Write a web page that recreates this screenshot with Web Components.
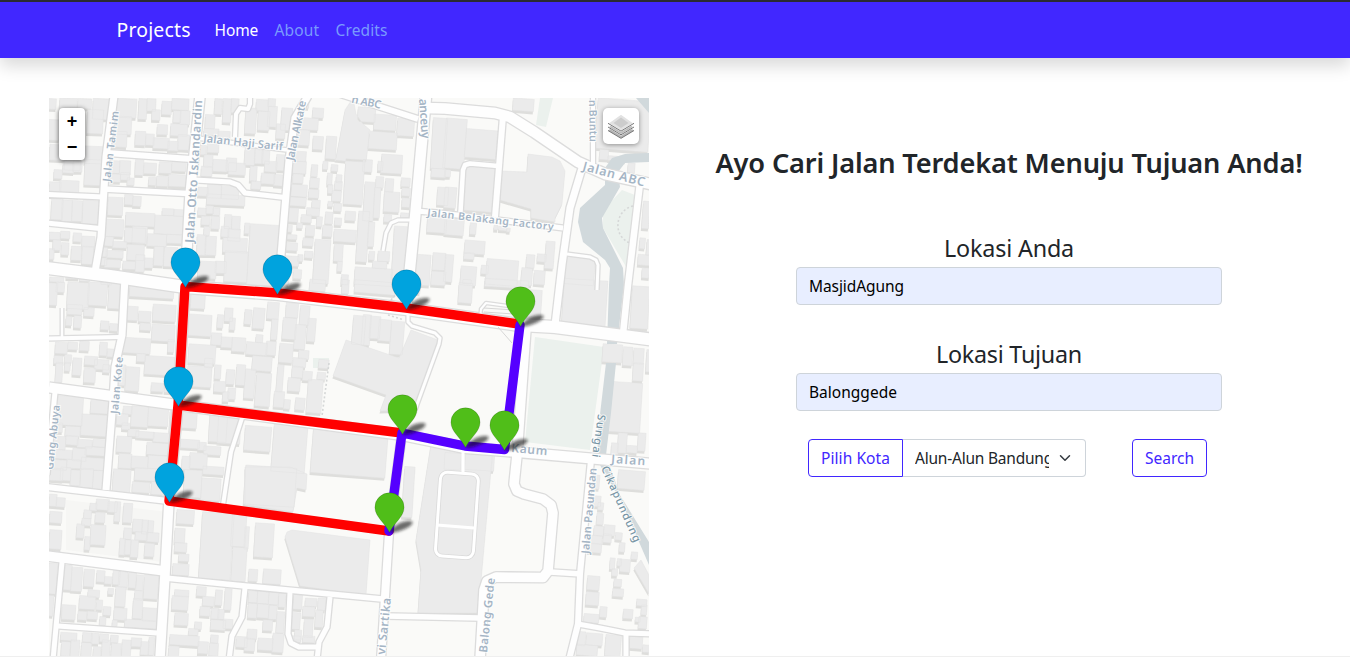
<!DOCTYPE html>
<html lang="id">
<head>
<meta charset="utf-8">
<title>Projects</title>
<style>
html,body{margin:0;height:100%;overflow:hidden}
body{font-family:"Noto Sans","Open Sans",sans-serif;color:#212529;background:#fff}
</style>
</head>
<body>
<app-page></app-page>
<script>
const define=(name,html,setup)=>customElements.define(name,class extends HTMLElement{
  connectedCallback(){
    if(this.shadowRoot)return;
    const t=document.createElement('template');
    t.innerHTML=html;
    this.attachShadow({mode:'open'}).append(t.content.cloneNode(true));
    if(setup)setup.call(this,this.shadowRoot);
  }
});

/* Text tracked to occupy a given width */
define('fit-text',`<style>:host{display:inline-block;white-space:nowrap}span{display:inline-block}</style><span><slot></slot></span>`,function(root){
  const s=root.querySelector('span'),w=+this.getAttribute('width'),n=this.textContent.length;
  this.style.width=w+'px';
  const d=(w-s.getBoundingClientRect().width)/n;
  s.style.letterSpacing=d.toFixed(3)+'px';
});

define('nav-bar',`<style>
:host{display:block;border-top:2px solid #2a2a33;box-shadow:0 8px 16px rgba(0,0,0,.15);position:relative}
nav{height:56px;background:#4127ff;display:flex;align-items:center;padding-left:116.6px;color:#fff;font-size:15.5px}
.brand{font-size:19.4px;margin-right:24px;padding-bottom:1px}
a{margin-right:16.5px;color:#fff}a.dim{color:#799bfd}
</style><nav><fit-text class="brand" width="74">Projects</fit-text><a><fit-text width="43.5">Home</fit-text></a><a class="dim"><fit-text width="44.5">About</fit-text></a><a class="dim"><fit-text width="52">Credits</fit-text></a></nav>`);

define('zoom-control',`<style>
:host{display:block;width:26px;border-radius:4px;background:#fff;box-shadow:0 1px 5px rgba(0,0,0,.65)}
div{height:26px;display:grid;place-items:center}div:first-child{height:25px;border-bottom:1px solid #ccc}
b{font:bold 18px/1 "Liberation Sans",sans-serif;color:#000}
</style><div><b>+</b></div><div><b>−</b></div>`);

define('layers-control',`<style>
:host{display:grid;place-items:center;width:36px;height:36px;border-radius:5px;background:#fff;box-shadow:0 1px 5px rgba(0,0,0,.4)}svg{display:block}
</style><svg width="28" height="28" viewBox="0 0 28 28"><g stroke-linejoin="round" stroke-width="1">
<path d="M1 18.500 14 10l13 8.500-13 7.800z" fill="#b5b5b5"/><path d="M1 18.500l13 7.800 13-7.800" fill="none" stroke="#777"/>
<path d="M1 15 14 6.500 27 15l-13 7.800z" fill="#bcbcbc" stroke="#fff" stroke-width="1.4"/><path d="M1 15l13 7.800L27 15" fill="none" stroke="#777"/>
<path d="M1 11.300 14 2l13 9.300-13 7.800z" fill="#e2e2e2" stroke="#fff" stroke-width="1.400"/><path d="M6.500 11 14 5.600l7.500 5.400-7.500 5z" fill="#ccc"/><path d="M1 11.300l13 7.800 13-7.800" fill="none" stroke="#777"/>
</g></svg>`);

/* Each district holds footprints as x,y,w,h at three units per pixel */
const districts=[
[45,95,3,`10 12 22 30 45 10 50 38 100 12 38 28 145 12 45 60 75 38 20 55 10 75 32 60 128 45 45 70 15 150 50 45 60 170 45 55 120 155 55 50 55 205 30 28 85 200 25 30 28 225 22 25 120 195 50 75 14 262 32 42 45 258 55 45
215 12 58 55 208 65 50 52 198 110 46 45 282 12 22 60 307 12 24 35 322 45 22 30 352 20 26 38 382 12 48 32 386 48 20 34 407 48 26 40 338 90 28 28 378 88 48 34 304 118 22 32 326 130 45 30 370 140 28 26 400 120 32 44 272 110 28 40
195 198 28 36 225 198 30 40 197 238 28 22 228 234 25 20 248 250 18 20 272 195 22 45 298 205 35 30 344 202 34 32 382 200 40 28 312 248 20 22 336 245 32 28 372 240 50 34 
190 308 42 52 240 300 22 28 265 305 22 28 353 342 32 18 388 345 30 18 243 355 85 38 330 363 86 54 184 374 50 50 240 400 60 42 263 395 42 50 308 418 55 35 366 420 44 24 180 426 24 26 204 440 40 18 164 458 22 26 185 468 48 20 248 450 48 45 235 500 35 22 273 480 24 50 300 490 22 28 328 455 26 56 358 458 38 56 164 490 20 20 180 495 45 22
20 313 32 60 52 316 28 62 82 318 28 60 114 318 55 68 14 413 30 20 48 410 25 20 86 415 22 24 112 425 36 30 25 435 20 30 50 444 20 35 80 455 28 40 112 455 32 52 14 462 12 30
510 12 20 45 535 12 22 70 560 12 20 40 482 60 26 40 478 102 42 18 520 110 34 20 460 152 22 26 488 148 32 24 478 180 24 36 505 195 40 34 545 190 28 38 470 215 30 28 552 205 48 34 
460 278 28 24 488 270 40 38 530 275 50 36 486 300 112 30 460 340 22 20 484 333 20 22 505 340 18 20 470 365 24 24 500 365 22 36 540 360 18 40 562 365 22 38 478 395 14 26 530 395 20 30 550 403 34 34 457 420 24 60 482 425 30 55 535 430 70 42 540 470 66 90 512 500 30 34 460 500 52 50
15 548 40 12 65 528 35 22 105 538 28 20 170 544 28 24 258 548 55 22`],
[245,95,4,`2 40 30 75 35 15 34 32 40 50 32 55 70 12 20 22 70 35 24 60 110 40 30 65 95 88 24 42 0 160 28 50 30 165 22 40 52 168 20 38 60 200 34 30 95 180 26 46 16 215 18 42 50 236 38 30 88 240 30 32 20 260 26 22
170 18 20 20 204 40 30 28 168 70 50 34 150 105 42 45 140 170 42 28 144 200 38 35 145 238 28 26 140 270 45 34 134 308 48 24 130 340 28 40 200 210 16 34 205 125 28 38 244 125 28 66 235 200 12 22 260 210 17 18 248 235 12 34 275 240 14 22 250 270 12 24 196 250 25 28 192 284 28 24 202 316 22 22 270 260 20 24 262 288 25 30 250 320 12 14 268 326 20 22 302 350 28 26 186 340 36 22 170 360 28 22 157 385 14 14 216 366 14 28 242 352 20 34 270 370 18 20 183 392 24 30 234 392 26 32 175 430 28 22 126 392 14 18 122 420 32 12 120 444 36 22 112 484 48 28 180 470 22 18 160 480 12 18
208 435 44 130 268 405 64 35 268 448 24 50 278 500 12 28 300 194 54 134 358 262 28 115 338 350 30 150 370 382 16 72 388 278 16 90 394 246 20 32 422 252 22 38 418 292 44 58 470 250 24 24 472 280 22 22 472 310 22 26 418 360 20 20 468 355 26 12 400 470 32 28 373 470 14 24 384 500 40 20 445 395 45 155 330 520 110 50 290 540 18 28 510 480 44 90 564 475 36 50 560 530 40 40
562 70 40 150 560 222 40 24 578 278 30 52 548 360 55 52 12 390 92 180 112 525 18 42 146 525 22 25 0 385 12 30
355 195 25 35 410 180 60 54 400 200 12 26 372 112 82 50 458 72 48 50 388 60 64 45 340 38 50 42`],
[445,95,5,`205 12 60 35 0 72 60 148 62 105 92 84 58 210 90 138 0 225 15 20 0 278 32 60 0 370 55 50 76 385 16 32 148 392 9 12 162 396 22 10 186 400 8 10 60 438 58 38 58 474 28 18 0 480 22 80 48 515 44 55 125 495 92 75 110 512 18 24 245 480 22 38 278 478 24 22 302 440 24 80 230 520 30 50 268 528 30 40 362 488 85 80 455 15 158 150 465 165 24 28 490 185 50 12 550 205 18 28 594 320 18 80 585 430 14 30 606 435 10 45 580 480 34 30 592 520 20 28`],
[45,280,4,`10 10 25 65 35 8 22 28 68 8 62 78 130 8 55 68 192 5 35 80 68 75 42 28 64 110 15 26 88 108 20 35 118 84 28 24 168 124 22 24 195 132 22 20 255 20 130 32 245 80 32 40 282 95 34 30 325 75 66 48 286 130 30 20 322 135 66 48 235 175 80 44 370 180 16 36 276 222 24 22 300 230 86 54 243 262 38 70 205 255 35 60 320 310 34 24 360 300 22 36
32 188 34 32 70 188 26 20 105 185 26 26 165 188 20 38 188 208 22 22 28 228 24 22 60 225 18 24 84 235 24 50 120 230 36 24 150 240 40 28 33 248 18 58 60 248 14 24 118 265 32 42 175 255 18 22 
440 5 40 80 430 105 68 62 518 105 15 38 540 85 22 38 555 115 14 34 500 160 28 34 530 172 30 30 562 174 38 40 432 195 78 54 428 260 70 60 480 236 22 26 510 256 16 40 508 305 32 30 545 270 22 42 575 255 24 60 534 336 16 28 550 325 20 32
34 350 78 85 138 360 58 40 110 405 82 62 35 430 16 26 62 440 42 28 20 470 40 38 64 468 34 26 98 480 42 22 145 480 42 20 10 510 70 25 84 506 38 36 122 502 60 24 10 540 54 28 66 540 40 24 110 535 80 34
236 380 24 22 260 380 48 60 310 380 58 58 216 402 32 32 375 390 15 72 232 430 20 18 250 450 30 18 274 456 52 18 216 470 42 46 326 460 52 26 306 490 66 34 222 522 36 42 260 530 48 34 310 528 56 38
412 400 42 44 494 400 50 85 520 410 65 80 408 480 54 24 460 488 22 22 478 500 48 24 435 520 50 45 412 530 22 38`],
[245,280,5,`195 0 45 32 292 0 18 40 330 5 120 35 470 0 55 38 0 90 18 42 25 85 32 60 68 68 32 48 80 118 16 60 124 70 34 42 114 115 38 62 166 78 26 56 188 116 22 68 150 135 30 72 34 165 18 22 5 188 60 36 65 185 26 40 104 192 38 55 162 212 28 24 23 230 56 42 145 235 36 26 142 260 30 32 0 268 28 86 33 280 42 98 97 255 16 80 88 335 28 46 118 360 16 26 174 275 26 26 130 295 34 38 188 300 42 98 152 355 26 34 222 240 28 24 218 278 22 20
324 108 34 85 353 105 22 90 376 110 28 65 402 120 34 62 438 125 36 98 0 440 76 72 84 436 98 140 202 445 222 140`],
[445,280,4,`55 0 22 10 120 0 130 22 42 10 38 58 218 30 70 78 355 0 128 138 560 20 50 125 474 194 56 52 535 202 26 54 567 206 28 45 565 250 28 52 605 210 10 65 495 308 92 148 520 460 24 58 580 460 20 52 500 490 18 38 545 498 30 20 0 520 46 48 62 525 84 45`],
[45,467,4,`14 5 38 35 48 2 28 38 78 10 25 45 108 5 35 56 145 12 35 56 205 8 50 68 270 5 90 36 263 46 50 30 320 46 34 36 418 10 50 80 470 35 55 65 475 0 60 22
14 83 20 34 35 93 24 26 15 135 34 32 14 190 34 55 155 98 36 30 190 105 25 30 210 105 14 58 236 110 24 56 136 110 18 20 118 130 20 24 152 138 26 28 112 155 24 20 96 172 20 40 138 175 42 58 120 210 14 38 265 158 26 36 292 160 16 40 310 162 14 34 238 184 20 32 272 195 34 24 306 198 34 26 225 215 14 48 240 220 16 42 258 220 20 50 300 230 26 38
396 130 50 40 390 185 28 42 390 228 34 26 402 262 28 20 384 292 46 32 468 138 92 198 562 120 40 118 562 242 40 100 10 290 24 90 10 386 14 60
56 296 22 72 80 302 30 70 118 308 28 50 156 312 22 32 180 330 20 20 205 312 18 40 222 315 24 45 252 312 20 50 275 325 18 45 298 325 40 70 190 365 14 16 212 360 28 58 130 370 32 20 104 388 46 38 155 400 16 28 270 372 22 26 265 396 26 58 294 424 42 38 176 420 20 24 208 424 36 34 52 415 38 42 100 434 24 24 128 434 28 22 165 450 16 24 203 460 12 18 240 460 96 22
48 498 46 22 50 525 24 42 78 520 24 48 114 498 26 26 140 500 20 30 165 502 24 22 198 506 20 20 110 528 28 40 146 540 20 28 172 520 22 48 200 530 26 40 232 520 24 50 260 514 28 24 288 525 22 38 312 512 14 52
390 370 40 18 382 388 46 40 390 440 38 34 456 360 26 26 512 370 18 44 540 366 18 62 474 390 32 26 466 420 28 26 500 425 20 30 520 428 16 28 498 460 42 28 536 458 26 26 450 466 18 20 432 486 26 18 375 506 86 28 498 505 20 22 460 525 28 34 494 530 24 36 372 538 28 30 575 510 30 30`],
[245,467,4,`0 0 150 115 30 170 54 100 12 308 24 34 56 308 50 42 0 180 10 65 476 0 28 150 12 372 24 34 38 375 32 34 72 376 26 36 102 380 18 40 10 410 24 42 38 412 32 40 72 416 22 40 96 435 20 62 55 460 26 30 8 488 26 28 0 515 28 36 40 515 42 34 84 500 30 55 146 382 24 44 182 395 32 22 174 420 34 28 220 395 20 34 212 430 20 50 142 438 22 48 178 458 24 52 150 490 18 28 140 508 26 16 174 508 34 18`],
[445,467,5,`520 12 78 54 444 25 18 40 446 88 20 30 460 108 14 20 456 140 18 32 478 175 30 30 448 178 26 28 432 206 38 24 476 202 22 24 430 230 38 26 512 198 18 20 524 228 14 26 560 256 16 20 496 274 12 32 518 276 10 20 526 278 28 36 502 306 14 20 428 328 34 40 424 376 36 38 508 338 20 20 504 366 30 22 576 398 28 18 590 415 14 28 536 428 26 26 466 420 18 30 418 442 42 24 572 452 12 12 582 450 22 34 400 495 20 40 425 500 46 34 396 535 60 30 482 505 44 62 555 510 36 34 594 535 18 20`]];

const roads=[
[7,'114,96 106,157 103,205 101,237 95,272'],[9.5,'200,96 190,195 185,287 178,405 169,500 165,574 160,658'],[6,'107,153 191,159'],[5.5,'104,189 188,193.5'],[5,'47,194.5 103,197'],[5,'47,223 100,228.5'],[12,'47,268 110,276 185,287 278,294 406,309 519,325'],[12,'519,325 555,327 655,340'],
[3.5,'197,138 287,150'],[5,'195,180 230,182 238,185 245,193 285,197.5'],[4,'235,137 236,114 240,108 248,109 250,104 250,96'],[7,'308,96 295,118 289,160 286,195 278,292'],[6,'340,94 418,119'],[10.5,'424,108 445,108.5 495,113 510,117 534,132 578,162 605,174 655,185'],[10.5,'426,96 415,218 406,308'],
[6,'503,116 495,217'],[4.5,'460.5,212 463,170 465,165 470,163.5 498,166'],[5,'416,211 445,213.5 563,228'],[7,'582,168 570,208 562,265 555,325'],[4,'593,96 593,168'],[6.5,'640,183 628,285 623,334'],[3,'567,254 590,257 596,260 598,265 597,290'],
[10,'49,387.5 178,405 402,435 465,448 504,451 655,464'],[6,'47,487 168,501 389,531'],[7,'125,277 122,335 115,367 113,400 106,490'],[4,'47,338.5 120,337'],[2.5,'62,308 62,337'],[5,'55,392 47,475'],
[9.5,'47,556 165,571'],[5.5,'165,578 245,586 382,599'],[5,'62,562 53,660'],[5,'58,626 157,633'],[5,'245,588 242,617 232,636 229,660'],[5,'290,592 288,634 291,643 299,647 317,647'],[5,'330,597 327,627 319,642 317,660'],
[8,'402,433 389,533 381,660'],[5.5,'386,616 480,618'],[3,'408,310 408,322 412,326 435,333 440,338 439,344 415,410'],[4,'243,415 231,452 223,505'],
[9.5,'526,328 517,455 514,484 517,491 524,494 543,499 551,505 553,513 548,571 543,577.5 496,577 487,581 484,590 480,660'],[5.5,'550,572 582,574'],[6,'591,460 580,574 578,624 569,660'],[5,'578,624 600,628 625,633 655,634'],[5,'626,633 626,660'],[3,'383,251 386,233 391,223 398,220 411,220'],[2,'480,319 481,309 486,303 516,307']];

const labels=[
[110,182,-83,71,10.5,'Jalan Tamim'],[193.5,243,-86.5,143,12,'Jalan Otto Iskandardin'],[203,142,6,80,11,'Jalan Haji Sarif'],[293.5,161,-78,61,11,'Jalan Alkate'],[351,102.5,12,30,11,'n ABC'],[419,99,86,40,12,'anceuy'],[589,100,89,42,10.5,'n Buntu'],[582,170,15,64,12.5,'Jalan ABC'],[427,216,6.5,127,10.5,'Jalan Belakang Factory'],[118,414,-85,57,10.5,'Jalan Kote'],[53,470,-84,65,10.5,'Gang Abuya'],[511,452,5,36,12,'Kaum'],[611,463,4,34,12,'Jalan'],[589,554,-85,86,11,'Jalan Pasundan'],[487,653,-84,75,11.5,'Balong Gede'],[385,655,-84,57,12,'vi Sartika'],[598,414,98,43,11,'Sungai'],[601,468,66,82,11,'Cikapundung']];

const pin=(c,x,y)=>`<g transform="translate(${x} ${y})"><path d="M0 0C4-6 10-10 18-11C27-12 23-6 14-2.500C8 0 3 1 0 0Z" fill="#111" opacity=".6" filter="url(#soft)"/><path d="M0 .5C-5-9.500-14.600-15.500-14.600-24.700A14.600 14.500 0 0 1 14.600-24.700C14.600-15.500 5-9.500 0 .5Z" fill="${c}" stroke="#000" stroke-opacity=".2" stroke-width=".7"/></g>`;

define('street-map',`<style>
:host{display:block;position:relative;width:600px;height:558px;overflow:hidden}
svg{display:block}
zoom-control{position:absolute;left:10px;top:10px}layers-control{position:absolute;right:10px;top:10px}
.label{fill:#a5b5c5;stroke:#fff;stroke-width:2;stroke-opacity:.75;paint-order:stroke;font-weight:600}
</style><div id="canvas"></div><zoom-control></zoom-control><layers-control></layers-control>`,function(root){
  const quads=([ox,oy,a,s])=>{
    const n=s.trim().split(/\s+/).map(Number),r=a*Math.PI/180,c=Math.cos(r),k=Math.sin(r);let d='';
    for(let i=0;i+3<n.length;i+=4){
      const [x,y,w,h]=n.slice(i,i+4),cx=x+w/2,cy=y+h/2;
      d+='M'+[[-1,-1],[1,-1],[1,1],[-1,1]].map(([p,q])=>{const u=p*(w+3)/2,v=q*(h+2)/2;return (ox+(cx+u*c-v*k*.9)/3).toFixed(1)+' '+(oy+(cy+u*k*.9+v*c)/3).toFixed(1)}).join('L')+'Z';
    }
    return d;
  };
  const blocks='M353 98L345 110 336 158 335 160 344 161 366 162 370 130 363 124 356 114ZM528 154L552 157 560 161 565 171 562 204 555 218 555 222 531 218 531 209 500 200 500 171 527 172ZM346 340L399 358 411 330 438 340 415 410 380 411 386 395 333 376ZM292 530L370 540 366 595 300 586 285 537 287 532ZM432 438L493 448 482 570 478 613 418 613 421 570 416 540ZM641 560L649 575 649 594 634 568ZM245 467L290 467 307 474 306 490 297 488 293 512 245 505Z';
  const buildings=districts.map(quads).join('')+blocks;
  const road=(f,col)=>roads.map(([w,p])=>`<polyline points="${p}" stroke-width="${w+f}" stroke="${col}"/>`).join('');
  root.querySelector('#canvas').innerHTML=`<svg width="600" height="558" viewBox="49 98 600 558">
<defs><filter id="soft" x="-40%" y="-60%" width="180%" height="220%"><feGaussianBlur stdDeviation="1.5"/></filter></defs>
<rect x="49" y="98" width="600" height="558" fill="#fafaf8"/>
<path d="M66 500L168 512 162 562 66 550Z" fill="#f6f6f4"/>
<g fill="#ebf1ed"><path d="M540 98H553L546 127 536 125ZM603 210L622 190 635 195 628 270 603 228ZM535 337L604 347 590 450 525 442ZM313 358H329V368H313Z"/></g>
<path d="${buildings}" transform="translate(-.6 2.6)" fill="#dededc"/>
<path d="${buildings}" fill="#ebebeb" stroke="#e2e2e2" stroke-width=".5"/>
<g fill="#d1d9dc"><path d="M649 153L625 154 612 158 605 168 605 185 580 208 578 222 583 242 605 260 610 268 609 285 607 344H617L624 285 623 268 603 228 602 218 620 187 618 172 625 163 649 162ZM606 363H616L611 413 606 455 620 495 649 542V565L623 505 600 465 597 440ZM636 98H649V113Z"/></g>
<g fill="none" stroke-linejoin="round">${road(2.6,'#dcdcdc')}${road(0,'#fefefe')}
<rect x="438" y="473" width="38" height="84" rx="7" stroke="#dadada" stroke-width="4.6" transform="rotate(4 457 514)"/><rect x="438" y="473" width="38" height="84" rx="7" stroke="#fff" stroke-width="3" transform="rotate(4 457 514)"/><path d="M437 525L474 528M463 450L463 472" stroke="#fff" stroke-width="3"/>
<path d="M633 206C615 210 612 236 630 243M329 363L322 416M388 315L404 320M391 300L400 290" stroke="#d5d7d7" stroke-width="1.6" stroke-dasharray="2 2.2"/>
<path d="M484 312L514 314M484 308L514 310M498 327L512 343" stroke="#d6d6d6"/>
</g>
<g class="label">${labels.map(([x,y,r,l,s,t])=>`<text font-size="${s}" textLength="${l}" transform="translate(${x} ${y}) rotate(${r})"${t=='Sungai'||t=='Cikapundung'?' style="fill:#7895a5;font-weight:500"':''}>${t}</text>`).join('')}</g>
<g fill="none" stroke-width="9.4" stroke-linecap="round" stroke-linejoin="round"><path d="M519 324L406 308 278 293 185 286.5 178 405 402 433M178 405L169 501 389 531" stroke="#f00"/><path d="M520 325L504.5 449.5 465 446 402 433 389 531" stroke="#50f"/></g>
${[[185.5,287],[277.5,294],[406.5,309],[178.5,406],[169.5,502]].map(p=>pin('#00a3de',...p)).join('')}${[[520.5,326],[402.5,434],[465.5,447],[504.5,450],[389.5,532]].map(p=>pin('#50be19',...p)).join('')}
</svg>`;
});

define('text-field',`<style>
:host{display:flex;flex-direction:column;align-items:center;width:426px}
label{font-size:23.3px;line-height:29px;margin-bottom:4px}
.box{box-sizing:border-box;width:100%;height:38px;border:1px solid #ced4da;border-radius:4px;background:#e8eeff;color:#000;font-size:15.5px;display:flex;align-items:center;padding:0 12px}
</style><label><slot name="label"></slot></label><div class="box"><slot></slot></div>`);

define('city-picker',`<style>
:host{display:flex;width:278px;height:38px;font-size:15.5px}
.btn{box-sizing:border-box;width:95px;border:1px solid #4127ff;border-radius:4px 0 0 4px;color:#4127ff;display:grid;place-items:center}
.select{box-sizing:border-box;flex:1;min-width:0;border:1px solid #ced4da;border-left:0;border-radius:0 4px 4px 0;display:flex;align-items:center;padding:0 12px}
.value{width:134px;overflow:hidden;display:flex;margin-right:10px}.value fit-text{flex:none}svg{flex:none}
</style><div class="btn"><fit-text width="69">Pilih Kota</fit-text></div><div class="select"><div class="value"><fit-text width="138">Alun-Alun Bandung</fit-text></div><svg width="12" height="12" viewBox="0 0 16 16" fill="none" stroke="#343a40" stroke-width="2" stroke-linecap="round" stroke-linejoin="round"><path d="m2 5 6 6 6-6"/></svg></div>`);

define('outline-button',`<style>:host{box-sizing:border-box;width:75px;height:38px;border:1px solid #4127ff;border-radius:4px;color:#4127ff;font-size:15.5px;display:grid;place-items:center}</style><slot></slot>`);

define('search-panel',`<style>
:host{display:flex;flex-direction:column;align-items:center;width:600px;padding-top:48px}
h1{margin:0;font-size:27.2px;font-weight:600;line-height:34px}
.first{margin-top:54px}.second{margin-top:35px}
.row{display:flex;margin:28px 3px 0 0;gap:46px}
</style><h1><fit-text width="587">Ayo Cari Jalan Terdekat Menuju Tujuan Anda!</fit-text></h1>
<text-field class="first"><fit-text slot="label" width="130">Lokasi Anda</fit-text><fit-text width="95">MasjidAgung</fit-text></text-field>
<text-field class="second"><fit-text slot="label" width="146">Lokasi Tujuan</fit-text><fit-text width="88">Balonggede</fit-text></text-field>
<div class="row"><city-picker></city-picker><outline-button><fit-text width="49">Search</fit-text></outline-button></div>`);

define('app-page',`<style>
:host{display:flex;flex-direction:column;height:657px;box-sizing:border-box;border-bottom:1px solid #efefef;overflow:hidden}
main{display:flex;padding:40px 41px 0 49px;gap:60px}
</style><nav-bar></nav-bar><main><street-map></street-map><search-panel></search-panel></main>`);
</script>
</body>
</html>
